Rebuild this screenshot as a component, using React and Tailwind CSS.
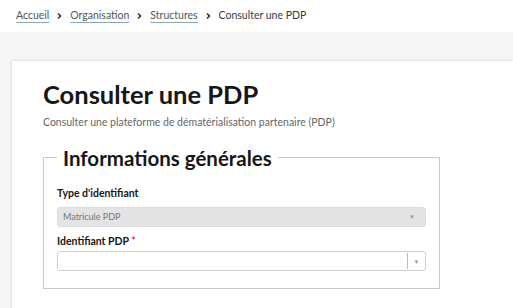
export default function App() {
  return (
    <div className="min-h-screen bg-[#f6f6f6] font-['Lato',sans-serif] text-[#161616]">
      <nav className="bg-white h-8 pl-4 flex items-center gap-2 text-[10.5px] text-[#555]">
        <a className="underline underline-offset-[3px] decoration-[#8aa]">Accueil</a>
        <Chevron />
        <a className="underline underline-offset-[3px] decoration-[#8aa]">Organisation</a>
        <Chevron />
        <a className="underline underline-offset-[3px] decoration-[#8aa]">Structures</a>
        <Chevron />
        <span className="text-[#3a3a3a]">Consulter une PDP</span>
      </nav>

      <div className="pt-[29px] pl-3">
        <div className="bg-white shadow-[0_0_3px_rgba(0,0,0,0.18)] pl-[31px] pt-[17px] pb-6 min-h-[260px]">
          <h1 className="text-[25.5px] font-bold leading-8">Consulter une PDP</h1>
          <p className="text-[10.5px] text-[#666] mt-[5px]">
            Consulter une plateforme de dématérialisation partenaire (PDP)
          </p>

          <fieldset className="mt-[15px] w-[397px] border border-[#c8c8c8] px-[13px] pb-[17px]">
            <legend className="px-[6px] text-[20.5px] font-bold leading-6">
              Informations générales
            </legend>
            <label className="block text-[10.5px] font-bold mt-[16px] mb-[5px]">
              Type d'identifiant
            </label>
            <div className="h-5 rounded-[3px] bg-[#e4e4e4] border border-[#dcdcdc] flex items-center justify-between pl-[5px] pr-[10px] text-[9px] text-[#777]">
              <span>Matricule PDP</span>
              <span className="text-[6px] text-[#999]">▼</span>
            </div>
            <label className="block text-[10.5px] font-bold mt-[7px] mb-[2px]">
              Identifiant PDP <span className="text-[#e1000f] font-normal">*</span>
            </label>
            <div className="h-5 rounded-[3px] bg-white border border-[#cfcfcf] flex items-stretch">
              <div className="flex-1" />
              <div className="w-[18px] border-l border-[#bbb] my-[1px] flex items-center justify-center text-[6px] text-[#999]">
                ▼
              </div>
            </div>
          </fieldset>
        </div>
      </div>
    </div>
  );
}

function Chevron() {
  return (
    <svg width="5" height="8" viewBox="0 0 5 8" className="text-[#333]">
      <path d="M1 1.5 L3.5 4 L1 6.5" fill="none" stroke="currentColor" strokeWidth="1.6" />
    </svg>
  );
}
